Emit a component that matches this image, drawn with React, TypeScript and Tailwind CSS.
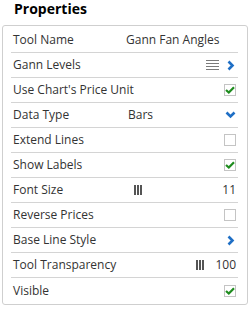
import React from "react";

const ChevronRight = () => (
  <svg width="8" height="11" viewBox="0 0 8 11" className="block">
    <path d="M1.5 1.5 L5.5 5.5 L1.5 9.5" fill="none" stroke="#1f6fc5" strokeWidth="2.6" />
  </svg>
);

const ChevronDown = () => (
  <svg width="11" height="8" viewBox="0 0 11 8" className="block">
    <path d="M1.5 1.5 L5.5 5.5 L9.5 1.5" fill="none" stroke="#1f6fc5" strokeWidth="2.6" />
  </svg>
);

const Lines = () => (
  <svg width="13" height="10" viewBox="0 0 13 10" className="block">
    <rect x="0" y="0" width="13" height="1" fill="#7a7a7a" />
    <rect x="0" y="3" width="13" height="1" fill="#7a7a7a" />
    <rect x="0" y="6" width="13" height="1" fill="#7a7a7a" />
    <rect x="0" y="9" width="13" height="1" fill="#7a7a7a" />
  </svg>
);

const Bars = () => (
  <svg width="8" height="10" viewBox="0 0 8 10" className="block">
    <rect x="0" y="0" width="2" height="10" fill="#555" />
    <rect x="3" y="0" width="2" height="10" fill="#555" />
    <rect x="6" y="0" width="2" height="10" fill="#555" />
  </svg>
);

const Check = ({ on }: { on: boolean }) => (
  <div className="w-3 h-3 border border-[#c4c4c4] bg-white flex items-center justify-center">
    {on && (
      <svg width="10" height="8" viewBox="0 0 10 8" className="block">
        <path d="M1 4 L3.8 6.5 L9 1.2" fill="none" stroke="#1e8c1e" strokeWidth="2.2" />
      </svg>
    )}
  </div>
);

const Row = ({
  label,
  last,
  children,
}: {
  label: string;
  last?: boolean;
  children?: React.ReactNode;
}) => (
  <div
    className={`h-[25px] flex items-center pl-[2px] pr-[2px] ${
      last ? "" : "border-b border-[#d4d4d4]"
    }`}
  >
    <span className="w-[114px] shrink-0 whitespace-nowrap">{label}</span>
    <div className="flex-1 flex items-center">{children}</div>
  </div>
);

export default function App() {
  return (
    <div
      className="w-[251px] h-[309px] bg-white text-[#333] text-[12px]"
      style={{ fontFamily: '"Open Sans", "Liberation Sans", sans-serif' }}
    >
      <h2 className="pl-[14px] h-[25px] text-[14px] font-bold text-black leading-[18px]">
        Properties
      </h2>
      <div className="ml-[2px] w-[246px] border border-[#cfcfcf] rounded-[3px] pl-[8px] pr-[9px] pt-[2px] pb-[1px]">
        <Row label="Tool Name">
          <span className="-ml-[1px]">Gann Fan Angles</span>
        </Row>
        <Row label="Gann Levels">
          <div className="ml-auto flex items-center gap-[8px] mr-[1px]">
            <Lines />
            <ChevronRight />
          </div>
        </Row>
        <Row label="Use Chart's Price Unit">
          <div className="ml-auto">
            <Check on />
          </div>
        </Row>
        <Row label="Data Type">
          <span className="ml-[1px]">Bars</span>
          <div className="ml-auto">
            <ChevronDown />
          </div>
        </Row>
        <Row label="Extend Lines">
          <div className="ml-auto">
            <Check on={false} />
          </div>
        </Row>
        <Row label="Show Labels">
          <div className="ml-auto">
            <Check on />
          </div>
        </Row>
        <Row label="Font Size">
          <div className="ml-[7px]">
            <Bars />
          </div>
          <span className="ml-auto">11</span>
        </Row>
        <Row label="Reverse Prices">
          <div className="ml-auto">
            <Check on={false} />
          </div>
        </Row>
        <Row label="Base Line Style">
          <div className="ml-auto mr-[1px]">
            <ChevronRight />
          </div>
        </Row>
        <Row label="Tool Transparency">
          <div className="ml-auto flex items-center gap-[11px]">
            <Bars />
            <span>100</span>
          </div>
        </Row>
        <Row label="Visible" last>
          <div className="ml-auto">
            <Check on />
          </div>
        </Row>
      </div>
    </div>
  );
}
